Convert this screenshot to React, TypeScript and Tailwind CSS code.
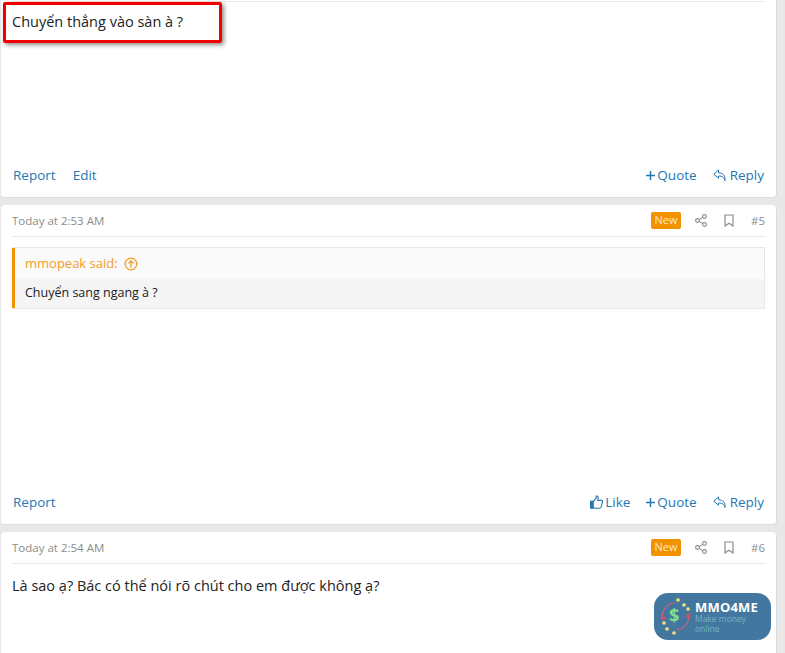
import React from "react";

const F = "[font-family:'Open_Sans','Noto_Sans',sans-serif]";

function Share() {
  return (
    <svg width="12" height="13" viewBox="0 0 12 13" fill="none" stroke="#8c8c8c" strokeWidth="1.1">
      <circle cx="2.5" cy="6.5" r="1.9" />
      <circle cx="9.5" cy="2.5" r="1.9" />
      <circle cx="9.5" cy="10.5" r="1.9" />
      <path d="M4.2 5.6 7.8 3.4M4.2 7.4l3.6 2.2" />
    </svg>
  );
}
function Bookmark() {
  return (
    <svg width="10" height="13" viewBox="0 0 10 13" fill="none" stroke="#8c8c8c" strokeWidth="1.2">
      <path d="M1 1h8v11L5 9.2 1 12z" />
    </svg>
  );
}
function Plus() {
  return (
    <svg width="9" height="9" viewBox="0 0 9 9" stroke="#2577b1" strokeWidth="1.5">
      <path d="M4.5 0v9M0 4.5h9" />
    </svg>
  );
}
function ReplyIcon() {
  return (
    <svg width="15" height="13" viewBox="0 0 15 13" fill="none" stroke="#2577b1" strokeWidth="1">
      <path d="M5.5 1 .8 5.2l4.7 4V7c3.6 0 5.6 1 6.4 4.6.8-4.6-1.6-7.6-6.4-7.8z" />
      <path d="M7.5 1.2 11 4" opacity="0" />
    </svg>
  );
}
function Thumb() {
  return (
    <svg width="13" height="14" viewBox="0 0 13 14" fill="none" stroke="#2577b1" strokeWidth="1.1">
      <rect x="0.6" y="6.2" width="2.6" height="7" fill="#2577b1" />
      <path d="M3.4 6.4 6.2 3.2V1c1.6-.3 2.4 1 1.6 4.4h3.6c1 0 1.4.8 1 1.6l-1.4 5.2c-.2.6-.6 1-1.2 1H5.2l-1.8-.6" />
    </svg>
  );
}

function Action({ icon, label }: { icon: React.ReactNode; label: string }) {
  return (
    <span className="flex items-center gap-[2px] text-[#2577b1] text-[13.5px] leading-[18px]">
      {icon}
      {label}
    </span>
  );
}

function Header({ time, num }: { time: string; num: string }) {
  return (
    <div className="mx-[11px] h-[32px] flex items-center border-b border-[#e7e7e7] text-[#8c8c8c] text-[11.5px]">
      <span className="flex-1">{time}</span>
      <span className="bg-[#f39200] text-[#fde9c8] rounded-[2px] h-[17px] w-[30px] flex items-center justify-center text-[11px] mr-[14px]">New</span>
      <span className="mr-[17px] flex"><Share /></span>
      <span className="mr-[17px] flex"><Bookmark /></span>
      <span>{num}</span>
    </div>
  );
}

function Footer({ left, like }: { left: string[]; like?: boolean }) {
  return (
    <div className="mt-auto mx-[12px] mb-[13px] flex items-center">
      <div className="flex-1 flex gap-[17px] text-[#2577b1] text-[13.5px] leading-[18px]">
        {left.map((l) => (
          <span key={l}>{l}</span>
        ))}
      </div>
      <div className="flex gap-[16px]">
        {like && <Action icon={<Thumb />} label="Like" />}
        <Action icon={<Plus />} label="Quote" />
        <Action icon={<ReplyIcon />} label="Reply" />
      </div>
    </div>
  );
}

function Logo() {
  return (
    <div className="absolute left-[654px] top-[593px] w-[117px] h-[47px] rounded-[14px] bg-[#44779f] flex items-center">
      <svg width="42" height="47" viewBox="0 0 42 47" className="shrink-0">
        <path d="M9 27a13 13 0 0 1 12-17" fill="none" stroke="#c9637e" strokeWidth="1.2" />
        <path d="M34 20a13 13 0 0 1-12 17" fill="none" stroke="#c9637e" strokeWidth="1.2" />
        <path d="M6 24l3 4 3-4zM31 24l3-4 3 4z" fill="#d0506a" />
        {[[24, 7], [30, 12], [34, 16], [10, 30], [13, 36], [20, 40]].map(([x, y]) => (
          <circle key={`${x}-${y}`} cx={x} cy={y} r="1.8" fill="#f6e27a" />
        ))}
        <text x="15" y="29" fontSize="18" fontWeight="700" fill="#7fe08a" fontFamily="'Open Sans',sans-serif">$</text>
      </svg>
      <div className="-ml-[1px] flex flex-col leading-none">
        <span className="text-white font-bold text-[13px] leading-[14px] tracking-[0.2px]">MMO4ME</span>
        <span className="text-[#6fb4c4] text-[8.5px] leading-[10px]">Make money online</span>
      </div>
    </div>
  );
}

export default function App() {
  return (
    <div className={`relative w-[785px] h-[653px] overflow-hidden bg-[#e8e8e8] ${F}`}>
      <div className="pl-[1px] w-[777px] flex flex-col gap-[7px]">
        <section className="h-[198px] bg-white rounded-b-[4px] border-b border-r border-[#dcdcdc] flex flex-col">
          <div className="mx-[11px] h-[2px] border-b border-[#e7e7e7]" />
          <p className="mx-[11px] mt-[9px] text-[14.5px] leading-[21px] text-[#222]">Chuyển thẳng vào sàn à ?</p>
          <Footer left={["Report", "Edit"]} />
        </section>

        <section className="h-[320px] bg-white rounded-[4px] border-b border-r border-[#dcdcdc] flex flex-col">
          <Header time="Today at 2:53 AM" num="#5" />
          <div className="mx-[11px] mt-[10px] border border-l-0 border-[#e7e7e7] bg-[#f5f5f5]">
            <div className="border-l-[3px] border-[#f39200]">
              <div className="h-[31px] bg-[#fafafa] flex items-center gap-[6px] pl-[10px] text-[#f39c26] text-[13px]">
                mmopeak said:
                <svg width="14" height="14" viewBox="0 0 14 14" fill="none" stroke="#f39c26" strokeWidth="1.3">
                  <circle cx="7" cy="7" r="5.8" />
                  <path d="M7 10.5V4M4.4 6.4 7 3.8l2.6 2.6" />
                </svg>
              </div>
              <div className="h-[29px] flex items-center pl-[10px] text-[12.5px] text-[#222]">Chuyển sang ngang à ?</div>
            </div>
          </div>
          <Footer left={["Report"]} like />
        </section>

        <section className="h-[140px] bg-white rounded-t-[4px] border-r border-[#dcdcdc] flex flex-col">
          <Header time="Today at 2:54 AM" num="#6" />
          <p className="mx-[11px] mt-[11px] text-[14.5px] leading-[21px] text-[#222]">Là sao ạ? Bác có thể nói rõ chút cho em được không ạ?</p>
        </section>
      </div>

      <div className="absolute left-[3px] top-[2px] w-[219px] h-[41px] border-[3px] border-[#f00000] rounded-[2px] shadow-[2px_2px_4px_rgba(0,0,0,0.45)] pointer-events-none" />
      <Logo />
    </div>
  );
}
